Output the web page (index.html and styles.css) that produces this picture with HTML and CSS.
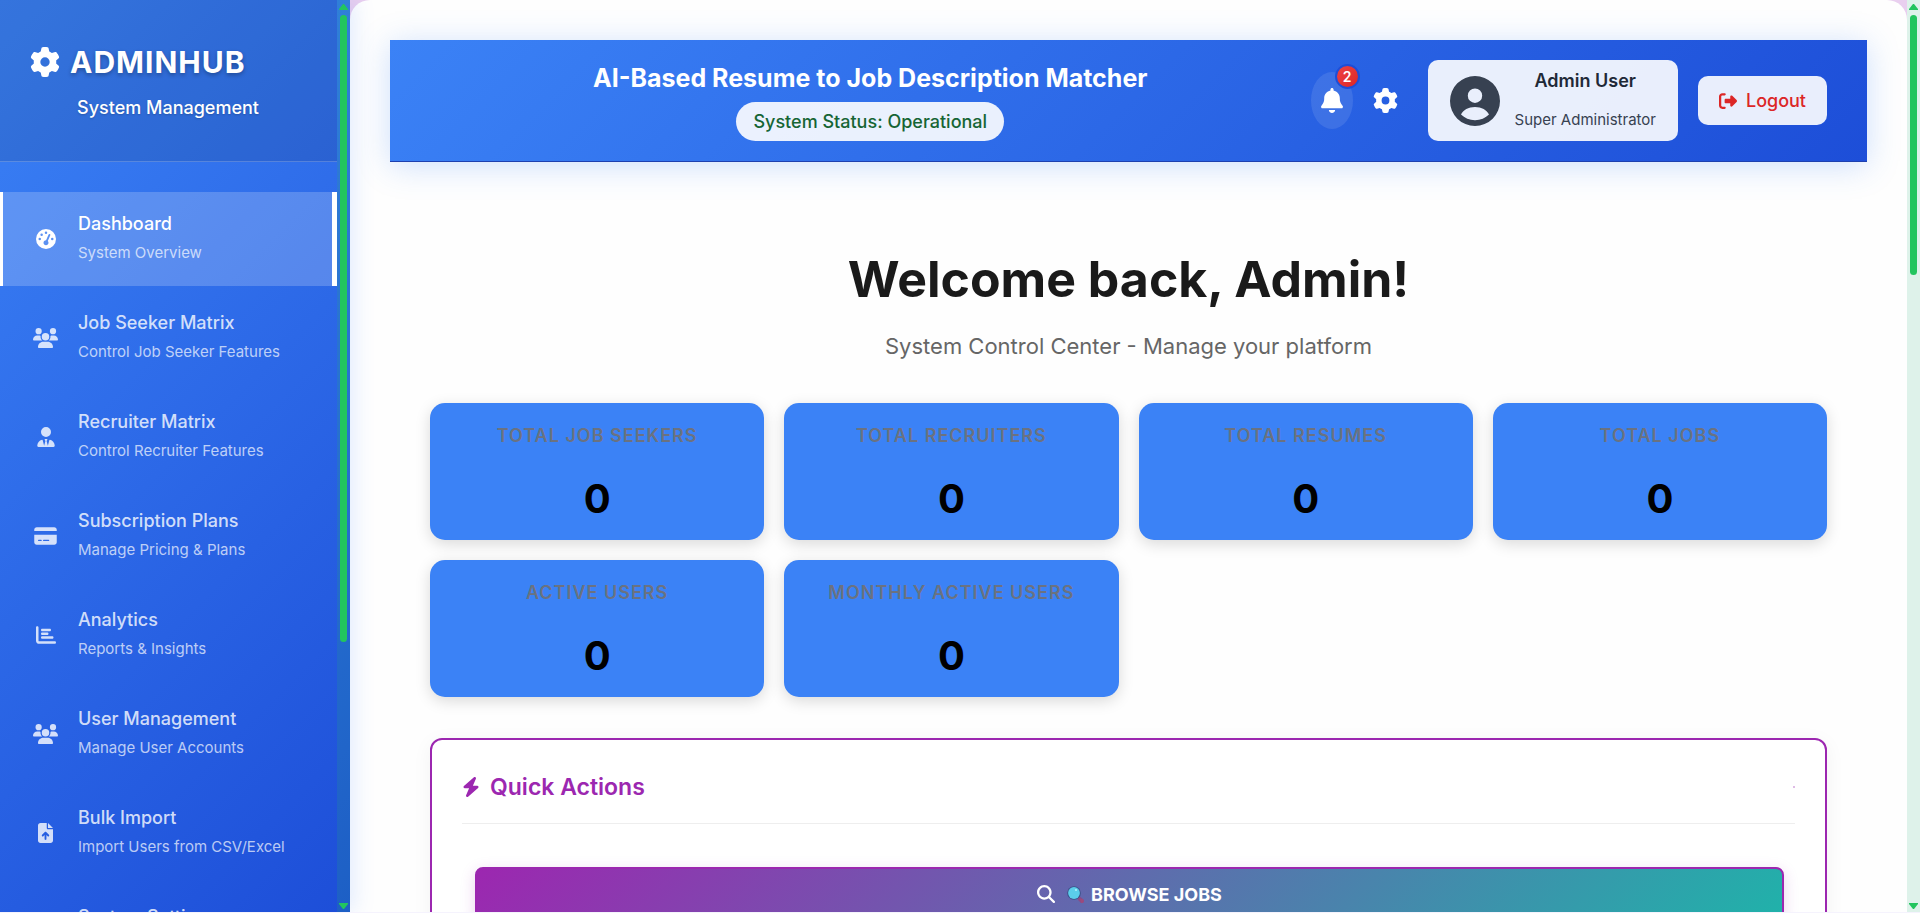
FILE: index.html
```html
<!DOCTYPE html>
<html lang="en">
<head>
<meta charset="utf-8">
<title>AdminHub</title>
<link rel="stylesheet" href="styles.css">
</head>
<body>
<svg class="sprite" aria-hidden="true">
  <symbol id="gear" viewBox="0 0 512 512"><path d="M495.9 166.6c3.2 8.7 .5 18.4-6.4 24.6l-43.3 39.4c1.1 8.3 1.7 16.8 1.7 25.4s-.6 17.1-1.7 25.4l43.3 39.4c6.9 6.2 9.6 15.9 6.4 24.6c-4.4 11.9-9.7 23.3-15.8 34.3l-4.7 8.1c-6.6 11-14 21.4-22.1 31.2c-5.9 7.2-15.7 9.6-24.5 6.8l-55.7-17.7c-13.4 10.3-28.2 18.9-44 25.4l-12.5 57.1c-2 9.1-9 16.3-18.2 17.8c-13.8 2.3-28 3.5-42.5 3.5s-28.7-1.2-42.5-3.5c-9.2-1.5-16.2-8.7-18.2-17.8l-12.5-57.1c-15.8-6.5-30.6-15.1-44-25.4L83.1 425.9c-8.8 2.8-18.6 .3-24.5-6.8c-8.1-9.8-15.5-20.2-22.1-31.2l-4.7-8.1c-6.1-11-11.4-22.4-15.8-34.3c-3.2-8.7-.5-18.4 6.4-24.6l43.3-39.4C64.6 273.1 64 264.6 64 256s.6-17.1 1.7-25.4L22.4 191.2c-6.9-6.2-9.6-15.9-6.4-24.6c4.4-11.9 9.7-23.3 15.8-34.3l4.7-8.1c6.6-11 14-21.4 22.1-31.2c5.9-7.2 15.7-9.6 24.5-6.8l55.7 17.7c13.4-10.3 28.2-18.9 44-25.4l12.5-57.1c2-9.1 9-16.3 18.2-17.8C227.3 1.2 241.5 0 256 0s28.7 1.2 42.5 3.5c9.2 1.5 16.2 8.7 18.2 17.8l12.5 57.1c15.8 6.5 30.6 15.1 44 25.4l55.7-17.7c8.8-2.8 18.6-.3 24.5 6.8c8.1 9.8 15.5 20.2 22.1 31.2l4.7 8.1c6.1 11 11.4 22.4 15.8 34.3zM256 336a80 80 0 1 0 0-160 80 80 0 1 0 0 160z"/></symbol>
  <symbol id="bell" viewBox="0 0 448 512"><path d="M224 0c-17.7 0-32 14.3-32 32V51.2C119 66 64 130.6 64 208v18.8c0 47-17.3 92.4-48.5 127.6l-7.4 8.3c-8.4 9.4-10.4 22.9-5.3 34.4S19.4 416 32 416H416c12.6 0 24-7.4 29.2-18.9s3.1-25-5.3-34.4l-7.4-8.3C401.3 319.2 384 273.9 384 226.8V208c0-77.4-55-142-128-156.8V32c0-17.7-14.3-32-32-32zm45.3 493.3c12-12 18.7-28.3 18.7-45.3H224 160c0 17 6.7 33.3 18.7 45.3s28.3 18.7 45.3 18.7s33.3-6.7 45.3-18.7z"/></symbol>
  <symbol id="gauge" viewBox="0 0 512 512"><path d="M0 256a256 256 0 1 1 512 0A256 256 0 1 1 0 256zM288 96a32 32 0 1 0 -64 0 32 32 0 1 0 64 0zM256 416c35.3 0 64-28.7 64-64c0-17.4-6.9-33.1-18.1-44.6L366 161.7c5.3-12.1-.2-26.3-12.3-31.6s-26.3 .2-31.6 12.3L257.9 288c-.6 0-1.3 0-1.9 0c-35.3 0-64 28.7-64 64s28.7 64 64 64zM176 144a32 32 0 1 0 -64 0 32 32 0 1 0 64 0zM96 288a32 32 0 1 0 0-64 32 32 0 1 0 0 64zm352-32a32 32 0 1 0 -64 0 32 32 0 1 0 64 0z"/></symbol>
  <symbol id="users" viewBox="0 0 640 512"><path d="M144 0a80 80 0 1 1 0 160A80 80 0 1 1 144 0zM512 0a80 80 0 1 1 0 160A80 80 0 1 1 512 0zM0 298.7C0 239.8 47.8 192 106.7 192h42.7c15.9 0 31 3.5 44.6 9.7c-1.3 7.2-1.9 14.7-1.9 22.3c0 38.2 16.8 72.5 43.3 96c-.2 0-.4 0-.7 0H21.3C9.6 320 0 310.4 0 298.7zM405.3 320c-.2 0-.4 0-.7 0c26.6-23.5 43.3-57.8 43.3-96c0-7.6-.7-15-1.9-22.3c13.6-6.3 28.7-9.7 44.6-9.7h42.7C592.2 192 640 239.8 640 298.7c0 11.8-9.6 21.3-21.3 21.3H405.3zM224 224a96 96 0 1 1 192 0 96 96 0 1 1 -192 0zM128 485.3C128 411.7 187.7 352 261.3 352H378.7C452.3 352 512 411.7 512 485.3c0 14.7-11.9 26.7-26.7 26.7H154.7c-14.7 0-26.7-11.9-26.7-26.7z"/></symbol>
  <symbol id="tie" viewBox="0 0 448 512"><path d="M96 128a128 128 0 1 0 256 0A128 128 0 1 0 96 128zm94.5 200.2l18.6 31L175.8 483.1l-36-146.9c-2-8.1-9.8-13.4-17.9-11.3C51.9 342.4 0 405.8 0 481.3c0 17 13.8 30.7 30.7 30.7H162.5c0 0 0 0 .1 0H168 280h5.5c0 0 0 0 .1 0H417.3c17 0 30.7-13.8 30.7-30.7c0-75.5-51.9-138.9-121.9-156.4c-8.1-2-15.9 3.3-17.9 11.3l-36 146.9L238.9 359.2l18.6-31c6.4-10.7-1.3-24.2-13.7-24.2H224 204.3c-12.4 0-20.1 13.6-13.7 24.2z"/></symbol>
  <symbol id="card" viewBox="0 0 576 512"><path d="M64 32C28.7 32 0 60.7 0 96v32H576V96c0-35.3-28.7-64-64-64H64zM576 224H0V416c0 35.3 28.7 64 64 64H512c35.3 0 64-28.7 64-64V224zM112 352h64c8.8 0 16 7.2 16 16s-7.2 16-16 16H112c-8.8 0-16-7.2-16-16s7.2-16 16-16zm112 16c0-8.8 7.2-16 16-16H368c8.8 0 16 7.2 16 16s-7.2 16-16 16H240c-8.8 0-16-7.2-16-16z"/></symbol>
  <symbol id="chart" viewBox="0 0 512 512"><path d="M32 32c17.700 0 32 14.300 32 32V400c0 8.800 7.200 16 16 16H480c17.700 0 32 14.300 32 32s-14.300 32-32 32H80c-44.200 0-80-35.800-80-80V64C0 46.300 14.300 32 32 32zm96 96c0-17.700 14.300-32 32-32l192 0c17.700 0 32 14.300 32 32s-14.300 32-32 32H160c-17.700 0-32-14.300-32-32zm32 64H288c17.700 0 32 14.300 32 32s-14.300 32-32 32H160c-17.700 0-32-14.300-32-32s14.300-32 32-32zm0 96H416c17.700 0 32 14.300 32 32s-14.300 32-32 32H160c-17.700 0-32-14.300-32-32s14.300-32 32-32z"/></symbol>
  <symbol id="upload" viewBox="0 0 384 512"><path d="M64 0C28.7 0 0 28.7 0 64V448c0 35.3 28.7 64 64 64H320c35.3 0 64-28.7 64-64V160H256c-17.7 0-32-14.3-32-32V0H64zM256 0V128H384L256 0zM216 408c0 13.3-10.7 24-24 24s-24-10.7-24-24V305.9l-31 31c-9.4 9.4-24.6 9.4-33.9 0s-9.4-24.6 0-33.9l72-72c9.4-9.4 24.6-9.4 33.9 0l72 72c9.4 9.4 9.4 24.600 0 33.900s-24.600 9.400-33.900 0l-31-31V408z"/></symbol>
  <symbol id="exit" viewBox="0 0 512 512"><path d="M377.9 105.9L500.7 228.7c7.2 7.2 11.3 17.1 11.3 27.3s-4.1 20.1-11.3 27.3L377.9 406.1c-6.4 6.4-15 9.9-24 9.9c-18.7 0-33.9-15.2-33.9-33.9l0-62.1-128 0c-17.7 0-32-14.3-32-32l0-64c0-17.7 14.3-32 32-32l128 0 0-62.1c0-18.7 15.2-33.9 33.9-33.9c9 0 17.6 3.6 24 9.9zM160 96L96 96c-17.7 0-32 14.3-32 32l0 256c0 17.7 14.3 32 32 32l64 0c17.7 0 32 14.3 32 32s-14.3 32-32 32l-64 0c-53 0-96-43-96-96L0 128C0 75 43 32 96 32l64 0c17.7 0 32 14.3 32 32s-14.3 32-32 32z"/></symbol>
  <symbol id="search" viewBox="0 0 512 512"><path d="M416 208c0 45.9-14.9 88.3-40 122.7L502.6 457.4c12.5 12.5 12.5 32.8 0 45.3s-32.8 12.5-45.3 0L330.7 376c-34.4 25.2-76.8 40-122.7 40C93.1 416 0 322.9 0 208S93.1 0 208 0S416 93.1 416 208zM208 352a144 144 0 1 0 0-288 144 144 0 1 0 0 288z"/></symbol>
  <symbol id="bolt" viewBox="0 0 448 512"><path d="M349.4 44.6c5.9-13.7 1.5-29.7-10.6-38.5s-28.6-8-39.9 1.8l-256 224c-10 8.8-13.6 22.9-8.9 35.3S50.7 288 64 288H175.5L98.6 467.4c-5.9 13.700-1.500 29.700 10.600 38.500s28.600 8 39.900-1.800l256-224c10-8.800 13.600-22.900 8.900-35.300s-16.600-20.700-30-20.700H272.500L349.400 44.600z"/></symbol>
</svg>

<div class="app">
  <aside class="sidebar">
    <div class="sidebar-body">
      <div class="brand">
        <div class="brand-row"><svg class="brand-icon"><use href="#gear"/></svg><span class="brand-name">ADMINHUB</span></div>
        <p class="brand-sub">System Management</p>
      </div>
      <nav class="nav">
        <a class="nav-item active" href="#"><span class="nav-icon"><svg class="w20"><use href="#gauge"/></svg></span><span class="nav-text"><span class="nav-title">Dashboard</span><span class="nav-sub">System Overview</span></span></a>
        <a class="nav-item" href="#"><span class="nav-icon"><svg class="w25"><use href="#users"/></svg></span><span class="nav-text"><span class="nav-title">Job Seeker Matrix</span><span class="nav-sub">Control Job Seeker Features</span></span></a>
        <a class="nav-item" href="#"><span class="nav-icon"><svg class="w18"><use href="#tie"/></svg></span><span class="nav-text"><span class="nav-title">Recruiter Matrix</span><span class="nav-sub">Control Recruiter Features</span></span></a>
        <a class="nav-item" href="#"><span class="nav-icon"><svg class="w23"><use href="#card"/></svg></span><span class="nav-text"><span class="nav-title">Subscription Plans</span><span class="nav-sub">Manage Pricing &amp; Plans</span></span></a>
        <a class="nav-item" href="#"><span class="nav-icon"><svg class="w20"><use href="#chart"/></svg></span><span class="nav-text"><span class="nav-title">Analytics</span><span class="nav-sub">Reports &amp; Insights</span></span></a>
        <a class="nav-item" href="#"><span class="nav-icon"><svg class="w25"><use href="#users"/></svg></span><span class="nav-text"><span class="nav-title">User Management</span><span class="nav-sub">Manage User Accounts</span></span></a>
        <a class="nav-item" href="#"><span class="nav-icon"><svg class="w15"><use href="#upload"/></svg></span><span class="nav-text"><span class="nav-title">Bulk Import</span><span class="nav-sub">Import Users from CSV/Excel</span></span></a>
        <a class="nav-item" href="#"><span class="nav-icon"><svg class="w20"><use href="#gear"/></svg></span><span class="nav-text"><span class="nav-title">System Settings</span></span></a>
      </nav>
    </div>
    <div class="track track-side"><svg class="arrow" viewBox="0 0 9 6"><path d="M4 0h1l4 5v1H0V5z"/></svg><div class="rail"><div class="thumb thumb-side"></div></div><svg class="arrow" viewBox="0 0 9 6"><path d="M0 0h9v1L5 6H4L0 1z"/></svg></div>
  </aside>

  <main class="main">
    <header class="topbar">
      <div class="topbar-center">
        <h1 class="topbar-title">AI-Based Resume to Job Description Matcher</h1>
        <span class="status">System Status: Operational</span>
      </div>
      <div class="topbar-right">
        <button class="bell" aria-label="Notifications"><svg class="bell-icon"><use href="#bell"/></svg><span class="badge">2</span></button>
        <button class="gear-btn" aria-label="Settings"><svg class="gear-icon"><use href="#gear"/></svg></button>
        <div class="user">
          <svg class="avatar" viewBox="0 0 50 50"><path fill-rule="evenodd" d="M25 0a25 25 0 1 1 0 50a25 25 0 1 1 0-50zM25 12.500a7.200 7.200 0 1 0 0 14.400a7.200 7.200 0 1 0 0-14.400zM11 38.500C14.500 42 19.500 44.200 25 44.200S35.500 42 39 38.500C37 34 31.500 31 25 31S13 34 11 38.500z"/></svg>
          <div class="user-text"><span class="user-name">Admin User</span><span class="user-role">Super Administrator</span></div>
        </div>
        <button class="logout"><svg class="exit-icon"><use href="#exit"/></svg>Logout</button>
      </div>
    </header>

    <div class="content">
      <h2 class="welcome">Welcome back, Admin!</h2>
      <p class="welcome-sub">System Control Center - Manage your platform</p>
      <section class="stats">
        <div class="stat"><h3 class="stat-label">Total Job Seekers</h3><p class="stat-value">0</p></div>
        <div class="stat"><h3 class="stat-label">Total Recruiters</h3><p class="stat-value">0</p></div>
        <div class="stat"><h3 class="stat-label">Total Resumes</h3><p class="stat-value">0</p></div>
        <div class="stat"><h3 class="stat-label">Total Jobs</h3><p class="stat-value">0</p></div>
        <div class="stat"><h3 class="stat-label">Active Users</h3><p class="stat-value">0</p></div>
        <div class="stat"><h3 class="stat-label">Monthly Active Users</h3><p class="stat-value">0</p></div>
      </section>
      <section class="quick">
        <div class="quick-head"><h2 class="quick-title"><svg class="bolt-icon"><use href="#bolt"/></svg>Quick Actions</h2><span class="quick-dot"></span></div>
        <button class="browse"><svg class="search-icon"><use href="#search"/></svg><svg class="lens" viewBox="0 0 17 17"><path d="M10 11l2-1 4 3 1 2-1 2-2 0-3-3z" fill="#8a4a86"/><path d="M13 13l3 0 1 2-1 2-2 0z" fill="#9c4a7c"/><circle cx="7" cy="7" r="6.800" fill="#3a4f88"/><circle cx="7" cy="7" r="5.900" fill="#5bcdea"/><circle cx="9" cy="4" r="1" fill="#b5f0fa"/></svg>BROWSE JOBS</button>
      </section>
    </div>
  </main>
  <div class="track track-page"><svg class="arrow" viewBox="0 0 9 6"><path d="M4 0h1l4 5v1H0V5z"/></svg><div class="rail"><div class="thumb thumb-page"></div></div><svg class="arrow" viewBox="0 0 9 6"><path d="M0 0h9v1L5 6H4L0 1z"/></svg></div>
</div>
</body>
</html>
```
FILE: styles.css
```css
* { box-sizing: border-box; margin: 0; padding: 0; }
body { font-family: Inter, "Liberation Sans", sans-serif; background: #f5f3fd; height: 100vh; overflow: hidden; }
a { text-decoration: none; color: inherit; }
button { font-family: inherit; border: 0; cursor: pointer; }
svg { fill: currentColor; display: block; flex: none; }
.sprite { display: none; }

.app { display: flex; height: calc(100vh - 1px); background: #e9cfef; overflow: hidden; }

.sidebar { width: 350px; flex: none; display: flex; background: linear-gradient(135deg, #3b82f6, #1d4ed8); color: #fff; box-shadow: 4px 0 20px rgba(59, 130, 246, .15); position: relative; z-index: 1; }
.sidebar-body { flex: 1; overflow: hidden; }
.brand { height: 162px; padding: 41px 30px 0; background: rgba(0, 0, 0, .1); border-bottom: 1px solid rgba(255, 255, 255, .2); }
.brand-row { display: flex; align-items: center; gap: 10px; height: 42px; }
.brand-icon { width: 30px; height: 30px; }
.brand-name { font-size: 30px; font-weight: 700; letter-spacing: 1px; text-shadow: 0 2px 4px rgba(0, 0, 0, .3); }
.brand-sub { margin: 11px 0 0 47px; font-size: 18px; line-height: 28px; font-weight: 500; text-shadow: 0 1px 2px rgba(0, 0, 0, .2); }
.nav { padding-top: 30px; display: flex; flex-direction: column; gap: 5px; }
.nav-item { display: flex; align-items: center; height: 94px; flex: none; padding-left: 30px; border-left: 3px solid transparent; color: rgba(255, 255, 255, .8); }
.nav-item.active { background: rgba(255, 255, 255, .2); border-left-color: #fff; border-right: 5px solid #fff; color: #fff; }
.nav-icon { width: 25px; display: flex; justify-content: center; }
.nav-icon svg { height: 20px; }
.w15 { width: 15px; } .w18 { width: 18px; } .w20 { width: 20px; } .w23 { width: 23px; } .w25 { width: 25px; }
.nav-text { margin-left: 20px; height: 60px; display: flex; flex-direction: column; gap: 2px; }
.nav-title { font-size: 18px; line-height: 30px; font-weight: 500; }
.nav-sub { font-size: 15px; line-height: 24px; color: rgba(255, 255, 255, .7); }

.track { width: 13px; flex: none; display: flex; flex-direction: column; align-items: center; padding: 4px 0 3px; color: #22c55e; }
.track-side { background: rgba(34, 197, 94, .15); }
.track-page { background: #def2ea; }
.arrow { width: 9px; height: 6px; }
.rail { flex: 1; padding: 5px 0; width: 7px; }
.thumb { width: 7px; border-radius: 4px; background: #22c55e; }
.thumb-side { height: 71%; }
.thumb-page { height: 29.5%; }

.main { flex: 1; min-width: 0; background: #fefefe; border-radius: 20px 20px 0 0; padding: 40px 40px 0; overflow: hidden; }
.topbar { display: flex; align-items: center; padding: 20px 40px; border-bottom: 1px solid #1e40af; background: linear-gradient(135deg, #3b82f6, #1d4ed8); box-shadow: 0 4px 30px rgba(59, 130, 246, .25); color: #fff; }
.topbar-center { flex: 1; display: flex; flex-direction: column; align-items: center; gap: 7px; }
.topbar-title { font-size: 25px; line-height: 34px; font-weight: 700; }
.status { font-size: 18px; line-height: 23px; font-weight: 500; padding: 8px 17px; border-radius: 20px; background: rgba(255, 255, 255, .9); color: #166534; }
.topbar-right { display: flex; align-items: center; gap: 20px; }
.bell { position: relative; width: 42px; height: 57px; border-radius: 50%; background: rgba(255, 255, 255, .1); color: #fff; display: flex; align-items: center; justify-content: center; }
.bell-icon { width: 22px; height: 25px; }
.badge { position: absolute; top: -8px; right: -7px; width: 25px; height: 25px; border-radius: 50%; border: 2px solid #1d4ed8; background: linear-gradient(135deg, #ef4444, #dc2626); font-size: 14px; line-height: 21px; font-weight: 600; text-align: center; }
.gear-btn { background: none; color: #fff; margin-right: 10px; }
.gear-icon { width: 25px; height: 25px; }
.user { display: flex; align-items: center; gap: 15px; padding: 9px 22px; border-radius: 10px; background: rgba(255, 255, 255, .9); color: #374151; }
.avatar { width: 50px; height: 50px; }
.user-text { display: flex; flex-direction: column; gap: 15px; text-align: center; }
.user-name { font-size: 18px; line-height: 24px; font-weight: 600; color: #1f2937; }
.user-role { font-size: 15px; line-height: 24px; }
.logout { display: flex; align-items: center; gap: 9px; height: 49px; padding: 0 21px; border-radius: 10px; background: rgba(255, 255, 255, .9); color: #dc2626; font-size: 18px; font-weight: 500; }
.exit-icon { width: 18px; height: 18px; }

.content { padding: 79px 40px 0; }
.welcome { font-size: 50px; line-height: 76px; font-weight: 700; color: #1a1a1a; text-align: center; }
.welcome-sub { font-size: 22px; line-height: 34px; margin-top: 12px; color: #666; text-align: center; }
.stats { display: grid; grid-template-columns: repeat(4, 1fr); gap: 20px; margin-top: 40px; }
.stat { height: 137px; padding: 20px; border-radius: 15px; background: #3b82f6; box-shadow: 0 4px 15px rgba(0, 0, 0, .15); text-align: center; }
.stat-label { font-size: 18px; line-height: 26px; font-weight: 600; letter-spacing: 1px; text-transform: uppercase; color: #6b7280; }
.stat-value { font-size: 40px; line-height: 60px; font-weight: 700; color: #000; margin-top: 20px; }
.quick { margin-top: 41px; border: 2px solid #9c27b0; border-radius: 12px; background: #fff; padding: 30px; box-shadow: 0 4px 20px rgba(0, 0, 0, .05); }
.quick-head { display: flex; justify-content: space-between; align-items: center; height: 54px; padding-bottom: 20px; border-bottom: 1px solid #eee; }
.quick-title { display: flex; align-items: center; gap: 10px; font-size: 23px; font-weight: 600; color: #9c27b0; }
.bolt-icon { width: 18px; height: 20px; }
.quick-dot { width: 2px; height: 2px; background: #dfbce6; }
.browse { display: flex; align-items: center; justify-content: center; width: calc(100% - 24px); margin: 43px 12px 30px 13px; height: 54px; border: 2px solid #9c27b0; border-radius: 8px; background: linear-gradient(135deg, #9c27b0, #20b2aa); color: #fff; font-size: 18px; font-weight: 700; box-shadow: 0 4px 15px rgba(156, 39, 176, .2); }
.search-icon { width: 18px; height: 18px; margin-right: 12px; }
.lens { width: 17px; height: 17px; margin-right: 7px; }
```
